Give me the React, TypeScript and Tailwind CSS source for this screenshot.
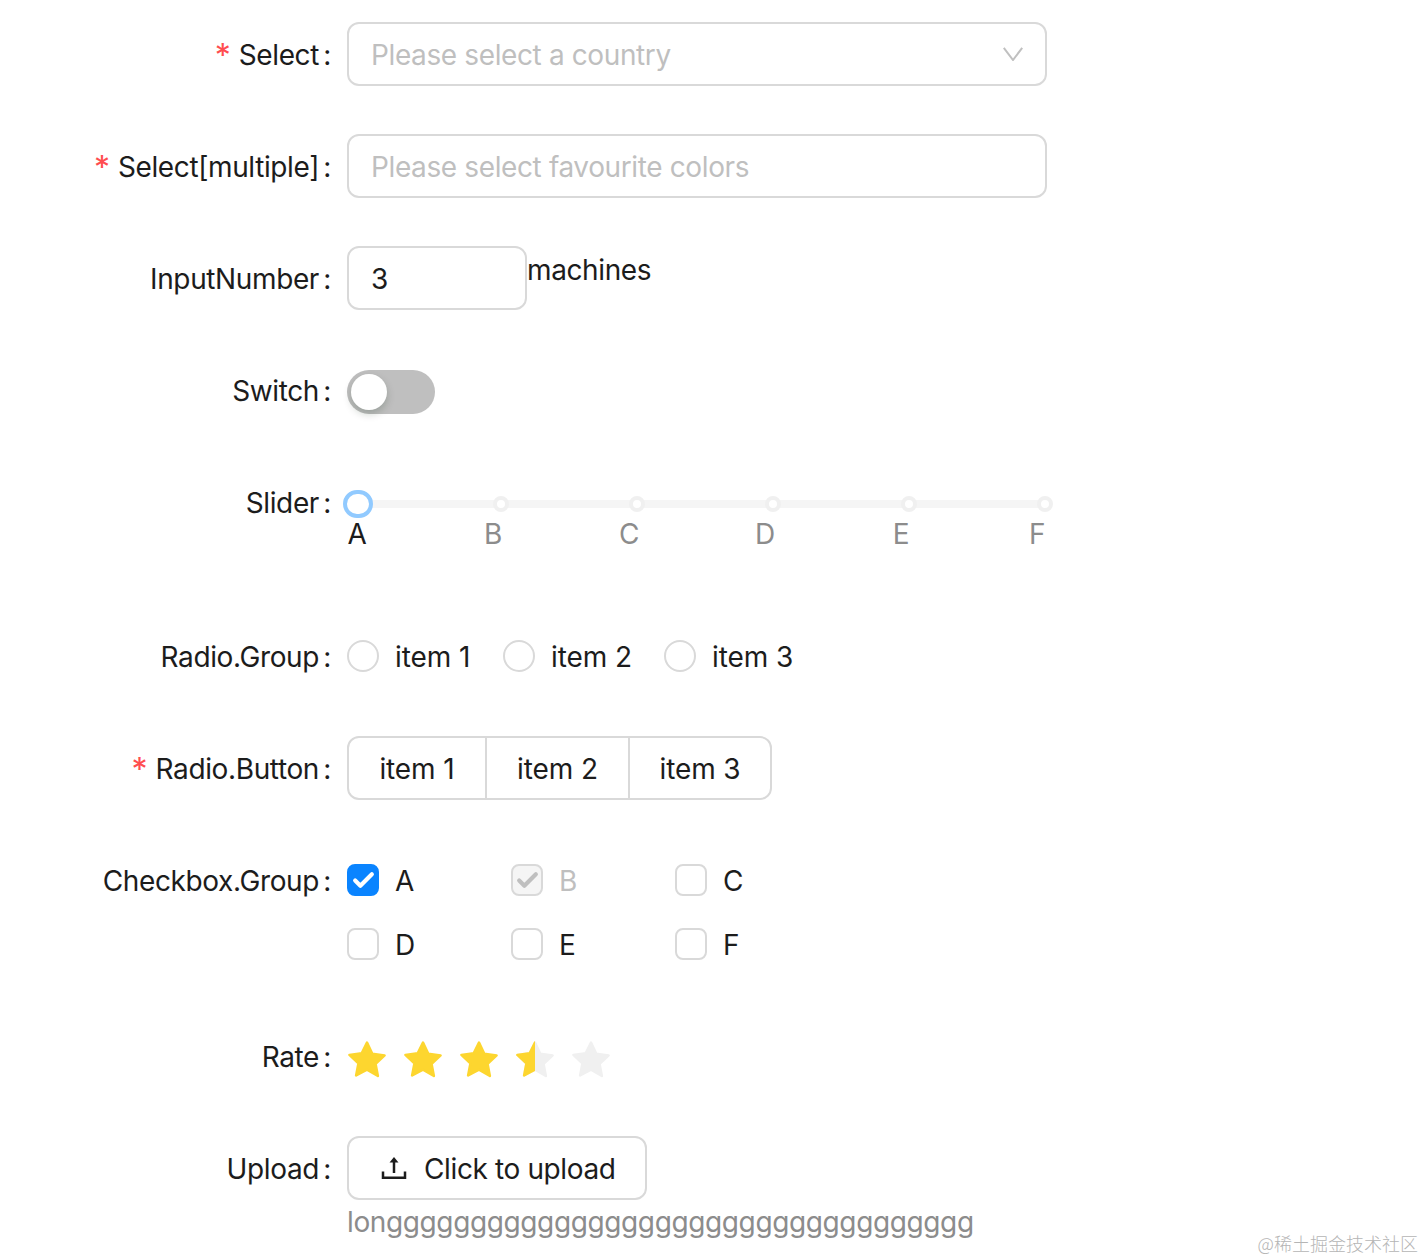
import { Check } from "lucide-react";
import type { ReactNode } from "react";

function Row({ label, required, children, className }: { label: string; required?: boolean; children: ReactNode; className?: string }) {
  return (
    <div className={`flex ${className ?? "mb-[48px]"}`}>
      <div className="w-[347px] shrink-0 h-[64px] flex items-center justify-end pr-[16px] pt-[2px]">
        {required && <span className="text-[#ff4d4f] text-[32px] mr-[8px] mt-[1px] tracking-normal">*</span>}
        <span>{label}</span>
        <span className="ml-[4px] w-[8px] text-center">:</span>
      </div>
      <div className="min-w-0 flex-1">{children}</div>
    </div>
  );
}

function Star({ fill }: { fill: string }) {
  return (
    <svg viewBox="0 0 40 38" className="w-[40px] h-[38px] shrink-0">
      <path d="M20 2.500l5.300 11.300 12.300 1.600-9 8.500 2.300 12.100L20 29.600 9.100 35.500l2.300-12.100-9-8.500 12.300-1.600z" fill={fill} stroke={fill} strokeWidth="2.500" strokeLinejoin="round" />
    </svg>
  );
}

const marks = ["A", "B", "C", "D", "E", "F"];

function CheckItem({ label, checked, disabled }: { label: string; checked?: boolean; disabled?: boolean }) {
  return (
    <div className="h-[64px] flex items-center">
      <span
        className={`w-[32px] h-[32px] rounded-[8px] flex items-center justify-center border-2 ${
          checked ? "bg-[#0a84ff] border-[#0a84ff]" : disabled ? "bg-[#f5f5f5] border-[#d9d9d9]" : "bg-white border-[#d9d9d9]"
        }`}
      >
        {checked && <Check size={25} strokeWidth={4} className="text-white" />}
        {disabled && <Check size={25} strokeWidth={4} className="text-[#bfbfbf]" />}
      </span>
      <span className={`ml-[16px] pt-[2px] ${disabled ? "text-[#bfbfbf]" : ""}`}>{label}</span>
    </div>
  );
}

export default function App() {
  return (
    <div className="relative h-[1260px] overflow-hidden bg-white pt-[22px] text-[28px] leading-[44px] tracking-[-0.38px] text-[#1c1c1c] font-['Inter',sans-serif]">
      <Row label="Select" required>
        <div className="w-[700px] h-[64px] border-2 border-[#d9d9d9] rounded-[12px] flex items-center justify-between pl-[22px] pr-[22px] pt-[2px]">
          <span className="text-[#bfbfbf]">Please select a country</span>
          <svg viewBox="0 0 20 14" className="w-[20px] h-[14px] -mt-[2px]" fill="none" stroke="#c0c0c0" strokeWidth="2">
            <path d="M.8.8L10 13 19.200.8" />
          </svg>
        </div>
      </Row>
      <Row label="Select[multiple]" required>
        <div className="w-[700px] h-[64px] border-2 border-[#d9d9d9] rounded-[12px] flex items-center pl-[22px] pt-[2px]">
          <span className="text-[#bfbfbf]">Please select favourite colors</span>
        </div>
      </Row>
      <Row label="InputNumber">
        <div className="flex items-start">
          <div className="w-[180px] h-[64px] border-2 border-[#d9d9d9] rounded-[12px] flex items-center pl-[22px] pt-[2px]">3</div>
          <span className="mt-[2px]">machines</span>
        </div>
      </Row>
      <Row label="Switch">
        <div className="h-[64px] flex items-center pt-[4px]">
          <div className="w-[88px] h-[44px] rounded-full bg-[#bfbfbf] flex items-center pl-[4px]">
            <span className="w-[36px] h-[36px] rounded-full bg-white shadow-[0_4px_8px_rgba(0,35,11,0.2)]" />
          </div>
        </div>
      </Row>
      <Row label="Slider" className="mb-[48px] h-[106px]">
        <div className="relative w-[706px] pt-[30px]">
          <div className="ml-[10px] w-[690px] h-[8px] bg-[#f5f5f5] rounded-full relative">
            {[1, 2, 3, 4, 5].map((i) => (
              <span key={i} className="absolute -top-[4px] w-[16px] h-[16px] rounded-full bg-white border-[4px] border-[#f0f0f0]" style={{ left: i * 136 }} />
            ))}
          </div>
          <span className="absolute left-[-4px] top-[20px] w-[30px] h-[28px] rounded-full bg-white border-[4px] border-[#91caff]" />
          <div className="flex mt-[4px] -ml-[58px]">
            {marks.map((m, i) => (
              <span key={m} className={`w-[136px] shrink-0 text-center ${i === 0 ? "text-[#1c1c1c]" : "text-[#8c8c8c]"}`}>{m}</span>
            ))}
          </div>
        </div>
      </Row>
      <Row label="Radio.Group">
        <div className="h-[64px] flex items-center">
          {["item 1", "item 2", "item 3"].map((t, i) => (
            <div key={t} className={`flex items-center tracking-[-0.1px] ${i === 0 ? "w-[156px]" : "w-[161px]"}`}>
              <span className="w-[32px] h-[32px] rounded-full border-2 border-[#d9d9d9]" />
              <span className="ml-[16px] pt-[2px]">{t}</span>
            </div>
          ))}
        </div>
      </Row>
      <Row label="Radio.Button" required>
        <div className="w-[425px] h-[64px] border-2 border-[#d9d9d9] rounded-[12px] flex items-center tracking-[-0.1px]">
          <div className="w-[138px] h-full flex items-center justify-center border-r-2 border-[#d9d9d9] pt-[2px]">item 1</div>
          <div className="w-[143px] h-full flex items-center justify-center border-r-2 border-[#d9d9d9] pt-[2px]">item 2</div>
          <div className="flex-1 h-full flex items-center justify-center pt-[2px]">item 3</div>
        </div>
      </Row>
      <Row label="Checkbox.Group">
        <div className="grid grid-cols-[164px_164px_164px]">
          <CheckItem label="A" checked />
          <CheckItem label="B" disabled />
          <CheckItem label="C" />
          <CheckItem label="D" />
          <CheckItem label="E" />
          <CheckItem label="F" />
        </div>
      </Row>
      <Row label="Rate">
        <div className="h-[64px] flex items-center gap-[16px] pt-[6px]">
          <Star fill="#fdd62f" />
          <Star fill="#fdd62f" />
          <Star fill="#fdd62f" />
          <div className="relative w-[40px] h-[38px]">
            <Star fill="#f0f0f0" />
            <div className="absolute left-0 top-0 w-[20px] h-[38px] overflow-hidden">
              <Star fill="#fdd62f" />
            </div>
          </div>
          <Star fill="#f0f0f0" />
        </div>
      </Row>
      <Row label="Upload" className="mb-0">
        <div className="w-[300px] h-[64px] border-2 border-[#d9d9d9] rounded-[12px] flex items-center pl-[32px]">
          <svg viewBox="0 0 26 22" className="w-[26px] h-[22px]" fill="none" stroke="#1c1c1c" strokeWidth="2.500">
            <path d="M2 14.500v6.200h22v-6.200" />
            <path d="M13 16V4" />
            <path d="M13 0l4.500 5.500h-9z" fill="#1c1c1c" stroke="none" />
          </svg>
          <span className="ml-[17px] pt-[2px]">Click to upload</span>
        </div>
        <div className="text-[#8c8c8c]">longgggggggggggggggggggggggggggggggggg</div>
      </Row>
      <span className="absolute right-[6px] bottom-[5px] text-[18px] leading-[24px] tracking-normal font-light text-[#b5b5b5] font-['Noto_Sans_CJK_SC',sans-serif]">@稀土掘金技术社区</span>
    </div>
  );
}
